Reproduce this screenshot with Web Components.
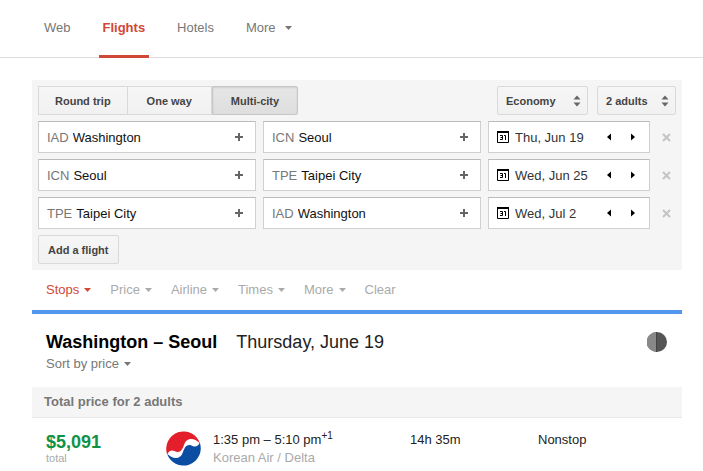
<!DOCTYPE html>
<html lang="en">
<head>
<meta charset="utf-8">
<title>Flights</title>
<style>
body { margin: 0; background: #fff; font: 13px/18px "Liberation Sans", Arial, sans-serif; color: #222; }
</style>
</head>
<body>
<flight-page></flight-page>
<script>
const base = `
*, *::before, *::after { box-sizing: border-box; }
button, input, select { font: inherit; color: inherit; margin: 0; padding: 0; border: 0; background: none; border-radius: 0; outline-offset: 1px; }
button { cursor: pointer; }
a { color: inherit; text-decoration: none; }
svg { display: block; flex: none; }
`;
function define(name, render) {
  customElements.define(name, class extends HTMLElement {
    connectedCallback() {
      if (this.shadowRoot) return;
      const root = this.attachShadow({ mode: 'open' });
      const t = document.createElement('template');
      t.innerHTML = render(this);
      root.append(t.content.cloneNode(true));
    }
  });
}
const caret = '<svg width="7" height="4" viewBox="0 0 7 4" fill="currentColor" aria-hidden="true"><path d="M0 0h7L3.5 4z"/></svg>';

define('nav-tab', el => `<style>${base}
:host { display: block; color: #777; }
:host([active]) { color: #d14836; font-weight: bold; }
a { display: flex; align-items: center; gap: 9px; height: 58px; padding: 0 4px; border-bottom: 3px solid transparent; }
:host([active]) a { border-color: #d14836; }
</style><a href="#"><slot></slot>${el.hasAttribute('menu') ? caret : ''}</a>`);

define('site-nav', () => `<style>${base}
:host { display: block; border-bottom: 1px solid #dedede; height: 58px; }
nav { display: flex; gap: 24px; padding: 0 40px; }
</style><nav><slot></slot></nav>`);

define('trip-tabs', () => `<style>${base}
:host { display: flex; font-size: 11px; font-weight: bold; color: #444; }
button { height: 29px; padding: 0 16px; border: 1px solid #d9d9d9; background: linear-gradient(#f6f6f6, #f1f1f1); }
button + button { border-left: 0; padding: 0 19px; }
button:first-child { border-radius: 2px 0 0 2px; }
button:last-child { border-radius: 0 2px 2px 0; padding: 0 18px; }
button[aria-pressed=true] { border: 1px solid #c6c6c6; background: linear-gradient(#e6e6e6, #dedede); box-shadow: inset 0 1px 2px rgba(0,0,0,.1); }
</style><button aria-pressed="false">Round trip</button><button aria-pressed="false">One way</button><button aria-pressed="true">Multi-city</button>`);

define('pick-list', el => `<style>${base}
:host { display: grid; align-items: center; font-size: 11px; font-weight: bold; color: #444; }
select, svg { grid-area: 1 / 1; }
select { appearance: none; width: 100%; height: 29px; padding: 0 20px 0 8px; border: 1px solid #d9d9d9; border-radius: 2px; background: linear-gradient(#f6f6f6, #f1f1f1); }
svg { justify-self: end; margin-right: 7px; pointer-events: none; }
</style><select aria-label="${el.getAttribute('label')}"><option>${el.getAttribute('value')}</option></select>
<svg width="8" height="12" viewBox="0 0 8 12" fill="#666" aria-hidden="true"><path d="M.5 4.500 4 .5l3.500 4zM.5 7.500h7l-3.500 4z"/></svg>`);

define('city-field', el => `<style>${base}
:host { display: flex; align-items: center; height: 32px; padding: 0 8px; border: 1px solid #d0d0d0; border-top-color: #bbb; background: #fff; min-width: 0; }
.text { display: flex; align-items: baseline; flex: 1; min-width: 0; }
label { color: #777; }
input { flex: 1; min-width: 0; height: 28px; padding-left: 4px; color: #111; }
button { display: grid; place-items: center; width: 16px; height: 20px; color: #666; }
</style><div class="text"><label for="city">${el.getAttribute('code')}</label><input id="city" value="${el.getAttribute('city')}"></div>
<button aria-label="Add another airport"><svg width="8" height="8" viewBox="0 0 8 8" fill="currentColor"><path d="M3 0h2v3h3v2H5v3H3V5H0V3h3z"/></svg></button>`);

define('date-field', el => `<style>${base}
:host { display: flex; align-items: center; height: 32px; padding: 0 8px; border: 1px solid #d0d0d0; border-top-color: #bbb; background: #fff; min-width: 0; }
input { flex: 1; min-width: 0; height: 28px; padding-left: 6px; color: #333; }
button { display: grid; place-items: center; width: 16px; height: 20px; margin-left: 8px; color: #000; }
button:first-of-type { margin-left: 0; }
</style><label for="day" aria-label="Date"><svg width="12" height="12" viewBox="0 0 12 12" fill="none"><path d="M.5 1h11v10.500H.5z" stroke="#000"/><path d="M0 0h12v2H0z" fill="#000"/><path d="M3 4.500h2.500v4H3M3.500 6.500h2M7 4.500h1.500v4.500" stroke="#000"/></svg></label>
<input id="day" value="${el.getAttribute('value')}">
<button aria-label="Previous day"><svg width="4" height="8" viewBox="0 0 4 8"><path d="M4 .5v7L0 4z"/></svg></button>
<button aria-label="Next day"><svg width="4" height="8" viewBox="0 0 4 8"><path d="M0 .5v7L4 4z"/></svg></button>`);

define('flight-leg', el => {
  const a = n => el.getAttribute(n);
  return `<style>${base}
:host { display: grid; grid-template-columns: 1fr 1fr 162px 19px; gap: 7px; align-items: center; }
button { display: grid; place-items: center; height: 20px; color: #c4c4c4; }
</style><city-field code="${a('from-code')}" city="${a('from')}"></city-field>
<city-field code="${a('to-code')}" city="${a('to')}"></city-field>
<date-field value="${a('date')}"></date-field>
<button aria-label="Remove flight"><svg width="9" height="9" viewBox="0 0 9 9" fill="none" stroke="currentColor" stroke-width="2"><path d="M1 1l7 7M8 1L1 8"/></svg></button>`;
});

define('search-panel', () => `<style>${base}
:host { display: flex; flex-direction: column; gap: 6px; padding: 6px; background: #f5f5f5; }
.bar { display: flex; gap: 9px; }
trip-tabs { margin-right: auto; }
.cabin { width: 91px; }
.people { width: 79px; }
.add { align-self: flex-start; height: 29px; padding: 0 9px; border: 1px solid #d9d9d9; background: linear-gradient(#f6f6f6, #f1f1f1); border-radius: 2px; font-size: 11px; font-weight: bold; color: #444; }
</style><div class="bar"><trip-tabs></trip-tabs><pick-list class="cabin" label="Cabin" value="Economy"></pick-list><pick-list class="people" label="Passengers" value="2 adults"></pick-list></div>
<slot></slot><button class="add">Add a flight</button>`);

define('filter-button', el => `<style>${base}
:host { display: block; color: #aaa; }
:host([active]) { color: #d14836; }
button { display: flex; align-items: center; gap: 5px; }
</style><button><slot></slot>${el.hasAttribute('plain') ? '' : caret}</button>`);

define('filter-bar', () => `<style>${base}
:host { display: flex; align-items: center; box-sizing: border-box; gap: 19px; height: 44px; padding: 0 14px; border-bottom: 4px solid #5396ee; }
</style><slot></slot>`);

define('result-header', () => `<style>${base}
:host { display: flex; align-items: flex-start; justify-content: space-between; padding: 17px 15px 12px 14px; }
.title { display: flex; gap: 19px; font-size: 18px; line-height: 22px; color: #222; }
h1 { margin: 0; font: inherit; font-weight: bold; color: #000; }
.sort { display: flex; align-items: center; gap: 5px; line-height: 22px; color: #777; }
.view { margin-top: 1px; }
</style><div><div class="title"><h1>Washington – Seoul</h1><span>Thursday, June 19</span></div>
<button class="sort">Sort by price${caret}</button></div>
<button class="view" aria-label="Contrast"><svg width="20" height="20" viewBox="0 0 20 20"><circle cx="10" cy="10" r="10" fill="#555"/><path d="M9.500 0a10 10 0 0 0 0 20z" fill="#888"/><path d="M9 0h1v20H9z" fill="#444"/></svg></button>`);

define('price-heading', () => `<style>${base}
:host { display: block; }
h2 { margin: 0; padding: 0 12px; font-size: 13px; line-height: 30px; font-weight: bold; color: #777; background: #f5f5f5; border-bottom: 1px solid #e8e8e8; }
</style><h2><slot></slot></h2>`);

define('flight-result', () => `<style>${base}
:host { display: grid; grid-template-columns: 120px 47px 197fr 128fr 144fr; padding: 13px 0 6px 14px; color: #222; }
.price { font-size: 18px; line-height: 22px; font-weight: bold; color: #0f9246; }
.total { font-size: 11px; line-height: 10px; color: #aaa; }
.line { color: #aaa; }
sup { font-size: 10px; line-height: 0; vertical-align: 5px; }
</style><div><div class="price">$5,091</div><div class="total">total</div></div>
<svg width="35" height="35" viewBox="0 0 35 35" role="img" aria-label="Korean Air"><defs><path id="half" d="M1.200 23.500A17.300 17.300 0 1 1 34 12.500C31 9 26 7 22.500 8.500C18.500 10 18.500 14 16.500 17.500C14.500 21.500 11 21.500 8.500 20C5.500 18.500 2.500 20 1.200 23.500z"/></defs><use href="#half" fill="#e31f2b"/><use href="#half" fill="#0b4da2" transform="rotate(180 17.500 17.500)"/></svg>
<div><div>1:35 pm – 5:10 pm<sup>+1</sup></div><div class="line">Korean Air / Delta</div></div>
<div>14h 35m</div><div>Nonstop</div>`);

define('flight-page', () => `<style>${base}
:host { display: block; }
main { margin: 22px 21px 0 32px; }
</style><site-nav><nav-tab>Web</nav-tab><nav-tab active>Flights</nav-tab><nav-tab>Hotels</nav-tab><nav-tab menu>More</nav-tab></site-nav>
<main><search-panel>
<flight-leg from-code="IAD" from="Washington" to-code="ICN" to="Seoul" date="Thu, Jun 19"></flight-leg>
<flight-leg from-code="ICN" from="Seoul" to-code="TPE" to="Taipei City" date="Wed, Jun 25"></flight-leg>
<flight-leg from-code="TPE" from="Taipei City" to-code="IAD" to="Washington" date="Wed, Jul 2"></flight-leg>
</search-panel>
<filter-bar><filter-button active>Stops</filter-button><filter-button>Price</filter-button><filter-button>Airline</filter-button><filter-button>Times</filter-button><filter-button>More</filter-button><filter-button plain>Clear</filter-button></filter-bar>
<result-header></result-header><price-heading>Total price for 2 adults</price-heading><flight-result></flight-result></main>`);
</script>
</body>
</html>
